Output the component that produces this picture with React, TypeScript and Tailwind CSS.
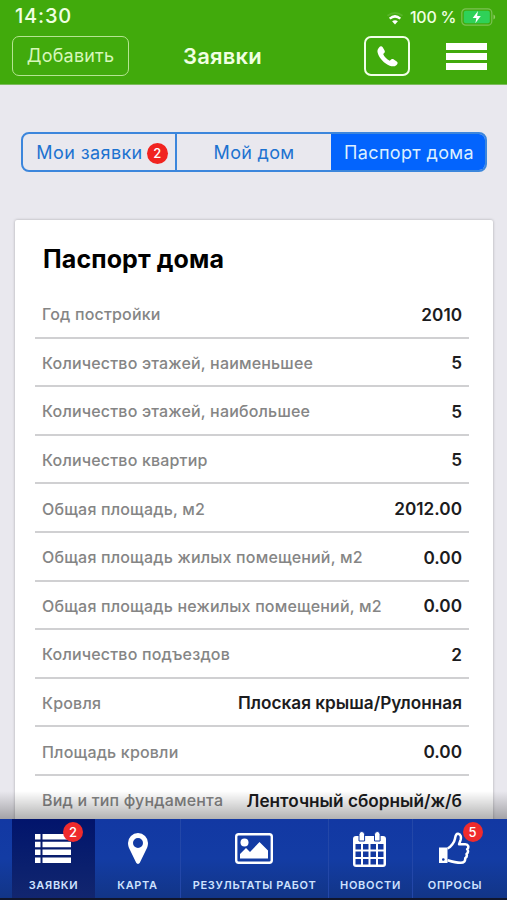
import type { ReactNode } from "react";
import clsx from "clsx";

const rows = [
  { label: "Год постройки", value: "2010" },
  { label: "Количество этажей, наименьшее", value: "5" },
  { label: "Количество этажей, наибольшее", value: "5" },
  { label: "Количество квартир", value: "5" },
  { label: "Общая площадь, м2", value: "2012.00" },
  { label: "Общая площадь жилых помещений, м2", value: "0.00" },
  { label: "Общая площадь нежилых помещений, м2", value: "0.00" },
  { label: "Количество подъездов", value: "2" },
  { label: "Кровля", value: "Плоская крыша/Рулонная" },
  { label: "Площадь кровли", value: "0.00" },
  { label: "Вид и тип фундамента", value: "Ленточный сборный/ж/б" },
];

function StatusBar() {
  return (
    <div className="flex h-[34px] items-center justify-between pl-[15px] pr-[11px] text-[#efffe2]">
      <span className="mt-[-2px] text-[20px] font-medium leading-none tracking-[0.8px]">14:30</span>
      <div className="flex items-center">
        <svg viewBox="0 0 18 14" className="mt-[2px] h-[14px] w-[18px]" fill="none" aria-hidden="true">
          <path d="M1.500 4.700Q9-.8 16.500 4.700" stroke="#58b528" strokeWidth="1.800" />
          <path d="M3.700 7.600Q9 3.200 14.300 7.600" stroke="#fff" strokeWidth="2.500" />
          <path d="M6.100 10.300Q9 8 11.900 10.300L9 13.500Z" fill="#fff" />
        </svg>
        <span className="ml-[6px] text-[16px] font-medium leading-none tracking-[-0.3px]">100 %</span>
        <svg viewBox="0 0 35 18" className="ml-[5px] h-[18px] w-[35px]" fill="none" aria-hidden="true">
          <rect x="0.800" y="0.800" width="30" height="16.400" rx="4" stroke="#7cc253" strokeWidth="1.200" />
          <rect x="2.800" y="2.800" width="26" height="12.400" rx="2" fill="#2fd158" />
          <path d="M32.500 6.500v5q1.700-.8 1.700-2.500t-1.700-2.500Z" fill="#8fca66" />
          <path d="M17 3 11.700 10h3.700L14.300 15.300 19.800 8h-3.700Z" fill="#fff" />
        </svg>
      </div>
    </div>
  );
}

function Header() {
  return (
    <header className="h-[85px] shrink-0 border-b border-[#7cbb5c] bg-[#41aa0c]">
      <StatusBar />
      <div className="flex h-[44px] items-center pl-[12px] pr-[20px]">
        <button className="h-[40px] w-[117px] rounded-[7px] border-[1.5px] border-[#b5e592] text-[18px] leading-none tracking-[0.2px] text-[#d6f7ba]">
          Добавить
        </button>
        <h1 className="ml-[54px] text-[22px] font-semibold leading-none tracking-[0.2px] text-[#f0ffe3]">Заявки</h1>
        <div className="ml-auto flex items-center justify-end gap-[36px]">
          <button className="flex h-[40px] w-[46px] items-center justify-center rounded-[7px] border-2 border-[#f1ffe8]" aria-label="Позвонить">
            <svg viewBox="0 0 24 24" className="h-[23px] w-[23px]" fill="#fff" aria-hidden="true">
              <path d="M3 2.800C4.400 1 6 .9 7 2.400l1.800 3c.9 1.500.5 2.600-1.300 4 .9 2.700 3.800 5.700 6.900 7 1.600-1.900 2.800-2.200 4.200-1.300l3 2c1.500 1 1.200 2.500-.4 3.900-1.700 1.500-4.200 1.700-6.900.6C8.700 19.300 3.400 13.900 1.800 8.300 1.200 6 1.500 4.400 3 2.800Z" />
            </svg>
          </button>
          <button className="flex w-[41px] flex-col gap-[3px]" aria-label="Меню">
            <span className="h-[7px] bg-white" />
            <span className="h-[7px] bg-white" />
            <span className="h-[7px] bg-white" />
          </button>
        </div>
      </div>
    </header>
  );
}

function Tabs() {
  return (
    <div className="ml-[21px] mr-[20px] mt-[47px] grid h-[40px] grid-cols-[154px_1fr_154px] overflow-hidden rounded-[8px] border-2 border-[#3c86dc] text-[18px] leading-none text-[#1c72d0]">
      <button className="flex items-center justify-center gap-[4px] border-r-2 border-[#3c86dc] pl-[6px]">
        <span className="pt-px tracking-[0.4px]">Мои заявки</span>
        <span className="mt-[2px] flex h-[21px] w-[21px] items-center justify-center rounded-full bg-[#f1231f] text-[13px] font-medium text-white">
          2
        </span>
      </button>
      <button className="pt-px tracking-[0.3px]">Мой дом</button>
      <button className="bg-[#0364fd] pl-[2px] pt-px tracking-[0.35px] text-[#dcefff]">Паспорт дома</button>
    </div>
  );
}

function PassportCard() {
  return (
    <section className="ml-[15px] mr-[14px] mt-[48px] rounded-[2px] bg-white px-[20px] shadow-[0_0_3px_rgba(0,0,0,0.28)]">
      <h2 className="flex h-[70px] items-center pl-[8px] pt-[9px] text-[25px] font-bold leading-none tracking-[0.1px] text-black">
        Паспорт дома
      </h2>
      <dl className="mr-[4px]">
        {rows.map((row) => (
          <div
            key={row.label}
            className="flex h-[48.6px] items-center justify-between whitespace-nowrap border-b-2 border-[#d0d0d2] px-[7px] pt-[2px] leading-none"
          >
            <dt className="text-[16px] font-medium tracking-[0.18px] text-[#858585]">{row.label}</dt>
            <dd className="text-[17.2px] font-semibold text-[#1c1c1e]">{row.value}</dd>
          </div>
        ))}
      </dl>
    </section>
  );
}

type NavItemProps = {
  label: string;
  badge?: string;
  active?: boolean;
  children: ReactNode;
};

function NavItem({ label, badge, active, children }: NavItemProps) {
  return (
    <button
      className={clsx(
        "flex flex-col items-center justify-between pb-[7px] pt-[9px]",
        active ? "bg-gradient-to-b from-[#02146c] to-[#12266f]" : "border-r border-[#2347a8] last:border-r-0",
      )}
    >
      <span className="relative flex h-[41px] items-center justify-center">
        {children}
        {badge && (
          <span className="absolute -right-[11px] -top-[6px] flex h-[20px] w-[20px] items-center justify-center rounded-full bg-[#ef2b2c] text-[13px] font-medium leading-none text-white">
            {badge}
          </span>
        )}
      </span>
      <span className="whitespace-nowrap text-[11px] font-semibold leading-none tracking-[0.68px] text-[#cfe2ff]">{label}</span>
    </button>
  );
}

function BottomNav() {
  return (
    <nav className="relative grid h-[81px] shrink-0 grid-cols-[83px_86px_148px_84px_84px] border-b-2 border-[#10162c] bg-gradient-to-b from-[#1238a3] via-[#133ca4] to-[#123587] pl-[12px]">
      <div className="pointer-events-none absolute inset-x-0 -top-[28px] h-[28px] bg-gradient-to-b from-transparent to-black/30" />
      <NavItem label="ЗАЯВКИ" badge="2" active>
        <svg viewBox="0 0 36 29" className="mr-px h-[29px] w-[36px]" fill="#fff" aria-hidden="true">
          <path d="M0 0h5.500v5.500H0zM7.500 0H36v5.500H7.500zM0 7.800h5.500v5.500H0zM7.500 7.800H36v5.500H7.500zM0 15.600h5.500v5.500H0zM7.500 15.600H36v5.500H7.500zM0 23.400h5.500v5.500H0zM7.500 23.400H36v5.500H7.500z" />
        </svg>
      </NavItem>
      <NavItem label="КАРТА">
        <svg viewBox="0 0 20 31" className="h-[31px] w-[20px]" fill="#fff" fillRule="evenodd" aria-hidden="true">
          <path d="M10 0a10 10 0 0 1 10 10c0 3-1 5-2 7l-6.200 12.800a2 2 0 0 1-3.600 0L2 17c-1-2-2-4-2-7A10 10 0 0 1 10 0Zm0 5a5 5 0 1 0 0 10 5 5 0 0 0 0-10Z" />
        </svg>
      </NavItem>
      <NavItem label="РЕЗУЛЬТАТЫ РАБОТ">
        <svg viewBox="0 0 38 31" className="mr-px h-[31px] w-[38px]" fill="#fff" aria-hidden="true">
          <rect x="1.200" y="1.200" width="35.600" height="28.600" rx="2.500" fill="none" stroke="#fff" strokeWidth="2.400" />
          <circle cx="9.500" cy="9.500" r="4" />
          <path d="M5 25.500v-4.500l6-6 4 4 9.500-10L33 17.500v8Z" />
        </svg>
      </NavItem>
      <NavItem label="НОВОСТИ">
        <svg viewBox="0 0 33 36" className="mr-[2px] h-[36px] w-[33px]" aria-hidden="true">
          <path d="M3 5h27q3 0 3 3v25q0 3-3 3H3q-3 0-3-3V8q0-3 3-3Z" fill="#fff" />
          <path d="M6 10V3.500q0-3 2.800-3t2.800 3V10ZM21.500 10V3.500q0-3 2.800-3t2.800 3V10Z" fill="#fff" stroke="#1238a0" strokeWidth="1" />
          <path
            d="M2.500 13h5.500v5.500H2.500zM10 13h5.500v5.500H10zM17.500 13H23v5.500h-5.500zM25 13h5.500v5.500H25zM2.500 20.500h5.500V26H2.500zM10 20.500h5.500V26H10zM17.500 20.500H23V26h-5.500zM25 20.500h5.500V26H25zM2.500 28h5.500v5.500H2.500zM10 28h5.500v5.500H10zM17.500 28H23v5.500h-5.500zM25 28h5.500v5.500H25z"
            fill="#1238a0"
          />
        </svg>
      </NavItem>
      <NavItem label="ОПРОСЫ" badge="5">
        <svg viewBox="0 0 31 33" className="mr-[2px] h-[33px] w-[31px]" fill="none" aria-hidden="true">
          <path d="M0 15.500h8.500V31H0Z" fill="#fff" />
          <circle cx="4.300" cy="27.500" r="1.300" fill="#1238a0" />
          <path
            d="M8.500 16.500c2.500-.5 3.800-3 5.200-4.800 2-2.400 2-3.700 2.500-6.200.5-2.700 1.300-4 3-3.700 2.600.4 3.200 3.200 2.400 6l-1.500 4.400h6.200c3 0 4 3 1.900 5 1.300 1.500 1 3.700-.7 4.800.7 1.800.2 3.300-1.300 4.100.3 3.100-1.200 4.700-4.500 4.700-5.200 0-6.700-.5-13.200-2.600"
            stroke="#fff"
            strokeWidth="2.500"
            strokeLinejoin="round"
          />
        </svg>
      </NavItem>
    </nav>
  );
}

export default function App() {
  return (
    <div className="flex h-[900px] w-[507px] flex-col overflow-hidden bg-[#e9e8ee] font-['Inter','Liberation_Sans',sans-serif]">
      <Header />
      <main className="min-h-0 flex-1 overflow-hidden">
        <Tabs />
        <PassportCard />
      </main>
      <BottomNav />
    </div>
  );
}
